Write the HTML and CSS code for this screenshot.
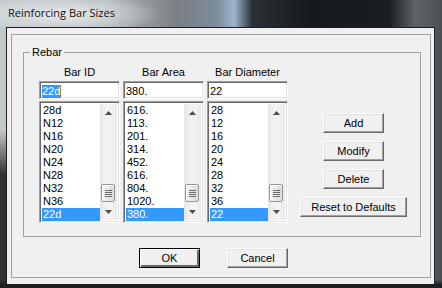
FILE: index.html
```html
<!DOCTYPE html>
<html lang="en">

<head>
    <meta charset="utf8">
    <title>Reinforcing Bar Sizes</title>
    <link rel="stylesheet" href="styles.css">
</head>

<body>
    <div class="titlebar">
        <span class="title">Reinforcing Bar Sizes</span>
    </div>
    <div class="client">
        <div class="panel">
            <fieldset class="group">
                <legend>Rebar</legend>
                <div class="group-body">
                    <div class="col">
                        <div class="col-label">Bar ID</div>
                        <div class="field"><span class="sel">22d</span><span class="caret"></span></div>
                        <div class="list">
                            <div class="items">
                                <div class="item">28d</div>
                                <div class="item">N12</div>
                                <div class="item">N16</div>
                                <div class="item">N20</div>
                                <div class="item">N24</div>
                                <div class="item">N28</div>
                                <div class="item">N32</div>
                                <div class="item">N36</div>
                                <div class="item selected">22d</div>
                            </div>
                            <div class="scrollbar">
                                <div class="arrow up"><svg width="7" height="4" viewBox="0 0 7 4"><path d="M3.5 0 L7 4 L0 4 Z" fill="#4d4d4d"/></svg></div>
                                <div class="track"><div class="thumb"><span></span><span></span><span></span><span></span></div></div>
                                <div class="arrow down"><svg width="7" height="4" viewBox="0 0 7 4"><path d="M0 0 L7 0 L3.5 4 Z" fill="#4d4d4d"/></svg></div>
                            </div>
                        </div>
                    </div>
                    <div class="col">
                        <div class="col-label">Bar Area</div>
                        <div class="field">380.</div>
                        <div class="list">
                            <div class="items">
                                <div class="item">616.</div>
                                <div class="item">113.</div>
                                <div class="item">201.</div>
                                <div class="item">314.</div>
                                <div class="item">452.</div>
                                <div class="item">616.</div>
                                <div class="item">804.</div>
                                <div class="item">1020.</div>
                                <div class="item selected">380.</div>
                            </div>
                            <div class="scrollbar">
                                <div class="arrow up"><svg width="7" height="4" viewBox="0 0 7 4"><path d="M3.5 0 L7 4 L0 4 Z" fill="#4d4d4d"/></svg></div>
                                <div class="track"><div class="thumb"><span></span><span></span><span></span><span></span></div></div>
                                <div class="arrow down"><svg width="7" height="4" viewBox="0 0 7 4"><path d="M0 0 L7 0 L3.5 4 Z" fill="#4d4d4d"/></svg></div>
                            </div>
                        </div>
                    </div>
                    <div class="col">
                        <div class="col-label">Bar Diameter</div>
                        <div class="field">22</div>
                        <div class="list">
                            <div class="items">
                                <div class="item">28</div>
                                <div class="item">12</div>
                                <div class="item">16</div>
                                <div class="item">20</div>
                                <div class="item">24</div>
                                <div class="item">28</div>
                                <div class="item">32</div>
                                <div class="item">36</div>
                                <div class="item selected">22</div>
                            </div>
                            <div class="scrollbar">
                                <div class="arrow up"><svg width="7" height="4" viewBox="0 0 7 4"><path d="M3.5 0 L7 4 L0 4 Z" fill="#4d4d4d"/></svg></div>
                                <div class="track"><div class="thumb"><span></span><span></span><span></span><span></span></div></div>
                                <div class="arrow down"><svg width="7" height="4" viewBox="0 0 7 4"><path d="M0 0 L7 0 L3.5 4 Z" fill="#4d4d4d"/></svg></div>
                            </div>
                        </div>
                    </div>
                    <div class="actions">
                        <button class="btn">Add</button>
                        <button class="btn">Modify</button>
                        <button class="btn">Delete</button>
                        <button class="btn wide">Reset to Defaults</button>
                    </div>
                </div>
            </fieldset>
            <div class="footer">
                <button class="btn default">OK</button>
                <button class="btn">Cancel</button>
            </div>
        </div>
    </div>
</body>

</html>
```

FILE: styles.css
```css
* {
    box-sizing: border-box;
}

body {
    margin: 0;
    width: 442px;
    height: 288px;
    overflow: hidden;
    font-family: "Liberation Sans", Arial, sans-serif;
    font-size: 11px;
    color: #000;
    background:
        radial-gradient(ellipse 100px 20px at 62px 14px, rgba(232, 236, 238, .95), rgba(232, 236, 238, 0)),
        linear-gradient(180deg, rgba(20, 24, 28, 0) 280px, #1c2024 285px),
        linear-gradient(180deg, rgba(20, 24, 28, 0) 130px, rgba(20, 24, 28, .85) 175px) 0 0 / 7px 100% no-repeat,
        linear-gradient(90deg, #c2c9cc 0, #b3babd 24%, #7a7f83 40%, #7d8c9b 49%, #9db6d1 53%, #2c3137 57%, #15191d 70%, #1a1e22 88%, #5e6468 94%, #4a4f53 100%);
}

.titlebar {
    height: 27px;
    padding: 0 0 2px 8px;
    display: flex;
    align-items: center;
}

.title {
    font-family: "Open Sans", sans-serif;
    font-size: 11px;
    color: #111;
}

.client {
    margin-left: 6px;
    width: 429px;
    height: 258px;
    border: 1px solid #1e1e1e;
    background-color: #f0f0f0;
    padding: 6px 0 0 4px;
}

.panel {
    width: 420px;
    height: 244px;
    border: 1px solid #a0a0a0;
}

.group {
    margin: 11px 0 0 11px;
    width: 398px;
    padding: 7px 0 13px 0;
    border: 1px solid #a0a0a0;
    min-width: 0;
}

.group legend {
    margin-left: 6px;
    padding: 0 2px;
    line-height: 13px;
}

.group-body {
    display: flex;
    padding-left: 15px;
    column-gap: 3px;
}

.col {
    display: flex;
    flex-direction: column;
    width: 81px;
}

.col-label {
    line-height: 13px;
    text-align: center;
    margin-bottom: 2px;
}

.field {
    height: 18px;
    background-color: #fff;
    border: 1px solid;
    border-color: #a0a0a0 #fff #fff #a0a0a0;
    box-shadow: inset 1px 1px #696969, inset -1px -1px #e3e3e3;
    padding: 2px 0 0 2px;
    line-height: 13px;
    display: flex;
    align-items: center;
    margin-bottom: 2px;
}

.field .sel {
    background-color: #3399ff;
    color: #fff;
    line-height: 13px;
}

.field .caret {
    width: 1px;
    height: 13px;
    background-color: #d9731f;
}

.list {
    height: 122px;
    display: flex;
    border: 1px solid;
    border-color: #a0a0a0 #fff #fff #a0a0a0;
    box-shadow: inset 1px 1px #696969, inset -1px -1px #e3e3e3;
    padding: 2px 2px 2px 2px;
    background-color: #fff;
}

.items {
    flex-grow: 1;
}

.item {
    height: 13px;
    line-height: 13px;
    padding-left: 1px;
    white-space: nowrap;
}

.item.selected {
    background-color: #3399ff;
    color: #fff;
}

.scrollbar {
    width: 17px;
    display: flex;
    flex-direction: column;
    background: linear-gradient(90deg, #e6e6e6, #f2f2f2 40%, #f2f2f2 70%, #e9e9e9);
}

.scrollbar .arrow {
    height: 17px;
    display: flex;
    align-items: center;
    justify-content: center;
}

.scrollbar .track {
    flex-grow: 1;
    display: flex;
    flex-direction: column;
    justify-content: flex-end;
    padding: 0 2px 1px 1px;
}

.scrollbar .thumb {
    height: 18px;
    border: 1px solid #979797;
    border-radius: 2px;
    background: linear-gradient(90deg, #f3f3f3, #e8e8e8 50%, #d8d8d8);
    box-shadow: inset 1px 1px #fff;
    display: flex;
    flex-direction: column;
    align-items: center;
    justify-content: center;
    row-gap: 1px;
}

.scrollbar .thumb span {
    width: 7px;
    height: 1px;
    background-color: #6b6b6b;
}

.actions {
    width: 107px;
    margin-left: 9px;
    padding-top: 47px;
    display: flex;
    flex-direction: column;
    align-items: center;
    row-gap: 8px;
}

.btn {
    width: 61px;
    height: 20px;
    padding: 0;
    font-family: "Liberation Sans", Arial, sans-serif;
    font-size: 11px;
    color: #000;
    background-color: #f0f0f0;
    border: 1px solid;
    border-color: #fff #696969 #696969 #fff;
    box-shadow: inset -1px -1px #a0a0a0, inset 1px 1px #e3e3e3;
}

.btn.wide {
    width: 107px;
}

.btn.default {
    border-color: #000;
    box-shadow: inset 1px 1px #fff, inset -2px -2px #696969;
}

.footer {
    display: flex;
    margin: 11px 0 0 127px;
    column-gap: 27px;
}
```
